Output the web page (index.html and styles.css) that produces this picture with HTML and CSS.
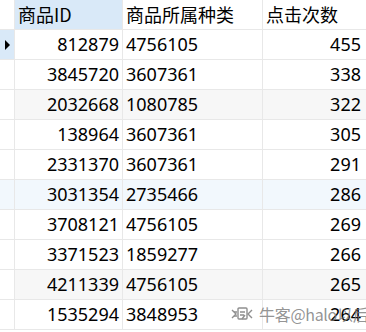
FILE: index.html
```html
<!DOCTYPE html>
<html lang="zh-CN">
<head>
    <meta charset="UTF-8">
    <title>商品点击次数</title>
    <link rel="stylesheet" href="styles.css">
</head>
<body>
    <div class="grid">
        <div class="row head">
            <div class="cell ind"></div>
            <div class="cell sel">商品ID</div>
            <div class="cell">商品所属种类</div>
            <div class="cell">点击次数</div>
        </div>
        <div class="row">
            <div class="cell ind cur"><span class="arrow"></span></div>
            <div class="cell num">812879</div>
            <div class="cell">4756105</div>
            <div class="cell num">455</div>
        </div>
        <div class="row">
            <div class="cell ind"></div>
            <div class="cell num">3845720</div>
            <div class="cell">3607361</div>
            <div class="cell num">338</div>
        </div>
        <div class="row gray">
            <div class="cell ind"></div>
            <div class="cell num">2032668</div>
            <div class="cell">1080785</div>
            <div class="cell num">322</div>
        </div>
        <div class="row">
            <div class="cell ind"></div>
            <div class="cell num">138964</div>
            <div class="cell">3607361</div>
            <div class="cell num">305</div>
        </div>
        <div class="row">
            <div class="cell ind"></div>
            <div class="cell num">2331370</div>
            <div class="cell">3607361</div>
            <div class="cell num">291</div>
        </div>
        <div class="row hover">
            <div class="cell ind"></div>
            <div class="cell num">3031354</div>
            <div class="cell">2735466</div>
            <div class="cell num">286</div>
        </div>
        <div class="row">
            <div class="cell ind"></div>
            <div class="cell num">3708121</div>
            <div class="cell">4756105</div>
            <div class="cell num">269</div>
        </div>
        <div class="row">
            <div class="cell ind"></div>
            <div class="cell num">3371523</div>
            <div class="cell">1859277</div>
            <div class="cell num">266</div>
        </div>
        <div class="row gray">
            <div class="cell ind"></div>
            <div class="cell num">4211339</div>
            <div class="cell">4756105</div>
            <div class="cell num">265</div>
        </div>
        <div class="row">
            <div class="cell ind"></div>
            <div class="cell num">1535294</div>
            <div class="cell">3848953</div>
            <div class="cell num">264</div>
        </div>
    </div>

    <div class="mark">
        <svg class="mark-icon" width="22" height="16" viewBox="0 0 22 16" fill="none" stroke="#8f8f8f" stroke-width="1.4">
            <path d="M1 4 L5 8 L1 12"/>
            <path d="M3 6 H6 M3 10 H6"/>
            <rect x="7" y="2" width="9" height="11" rx="1"/>
            <path d="M9 6 L14 6 M9 9 L13 9 M14 9 L11 13"/>
            <path d="M21 4 L17 8 L21 12"/>
        </svg>
        <span>牛客@halo以后</span>
    </div>
</body>
</html>
```

FILE: styles.css
```css
html,
body {
    height: 332px;
}
body {
    margin: 0;
    overflow: hidden;
    background: #fff;
    position: relative;
}
.grid {
    font-family: "Noto Sans", "Noto Sans CJK SC", sans-serif;
    font-size: 18px;
    color: #000;
}
.row {
    display: grid;
    grid-template-columns: 15px 108px 140px 1fr;
    height: 30px;
}
.cell {
    box-sizing: border-box;
    height: 30px;
    border-right: 1px solid #e8e8e8;
    border-bottom: 1px solid #e8e8e8;
    padding: 0 3px;
    line-height: 28px;
    white-space: nowrap;
}
.cell:last-child {
    border-right: none;
    padding-right: 5px;
}
.num {
    text-align: right;
}
.ind {
    padding: 0;
    position: relative;
}
.head .cell {
    font-family: "Noto Sans CJK SC", sans-serif;
    font-size: 18px;
}
.head .sel {
    background: #d9e9f8;
}
.gray .cell {
    background: #f7f7f7;
}
.gray .ind,
.hover .ind {
    background: #fff;
}
.hover .cell {
    background: #f2f8fd;
}
.cur {
    background: #d9e9f8;
}
.arrow {
    position: absolute;
    left: 5px;
    top: 10px;
    width: 0;
    height: 0;
    border-top: 5px solid transparent;
    border-bottom: 5px solid transparent;
    border-left: 5px solid #000;
}
.mark {
    position: absolute;
    left: 231px;
    top: 304px;
    width: 135px;
    height: 20px;
    overflow: hidden;
    display: flex;
    align-items: center;
    gap: 6px;
    color: rgba(120, 120, 120, 0.8);
    font-family: "Noto Sans CJK SC", sans-serif;
    font-size: 16px;
    letter-spacing: -0.3px;
    line-height: 20px;
    white-space: nowrap;
}
.mark-icon {
    display: block;
    flex: none;
}
```
